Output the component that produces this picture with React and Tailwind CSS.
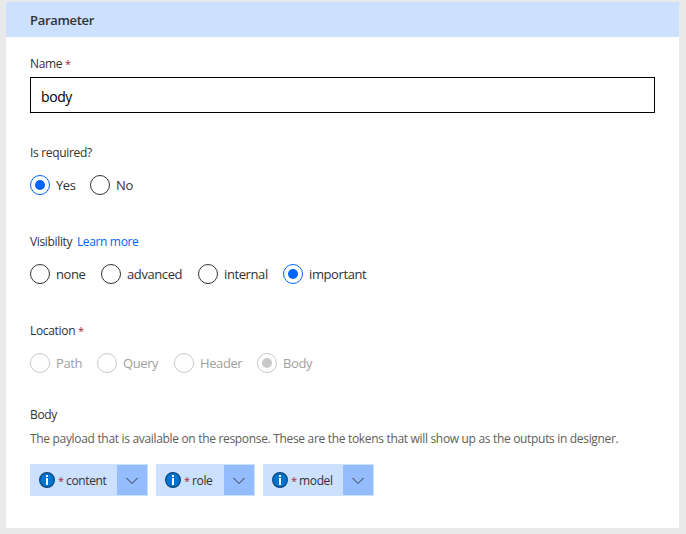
function Radio({ label, checked, disabled, width }) {
  const ring = disabled ? 'border-[#c8c8c8]' : checked ? 'border-[#0066ff]' : 'border-[#323130]';
  const dot = disabled ? 'bg-[#c8c8c8]' : 'bg-[#0066ff]';
  const text = disabled ? 'text-[#a19f9d]' : 'text-[#323130]';
  return (
    <label className={`flex items-center gap-1.5 ${width ?? ''}`}>
      <span className={`flex size-5 shrink-0 items-center justify-center rounded-full border ${ring}`}>
        {checked && <span className={`size-2.5 rounded-full ${dot}`} />}
      </span>
      <span className={`whitespace-nowrap text-[13px] leading-5 tracking-[-0.4px] ${text}`}>{label}</span>
    </label>
  );
}

function Star() {
  return <span className="text-[11px] leading-none text-[#a4262c]">*</span>;
}

function Token({ label, width }) {
  return (
    <div className={`flex h-8 border border-[#cce0ff] bg-[#cce0ff] ${width}`}>
      <div className="flex min-w-0 flex-1 items-center pl-2">
        <svg className="size-4 shrink-0" viewBox="0 0 16 16">
          <circle cx="8" cy="8" r="7.4" fill="#0072d0" stroke="#10477a" strokeWidth="1.2" />
          <path d="M7 3h2v2H7zM7 6h2v7H7z" fill="#fff" />
        </svg>
        <span className="ml-[3px] w-2 shrink-0 pt-px leading-4">
          <Star />
        </span>
        <span className="pt-0.5 whitespace-nowrap text-[12px] leading-4 tracking-[-0.35px]">{label}</span>
      </div>
      <button className="flex w-[30px] items-center justify-center bg-[#94bdff]">
        <svg className="mt-0.5" width="12" height="8" viewBox="0 0 12 8" fill="none" stroke="#323130">
          <path d="M.5 1 6 6.5 11.5 1" />
        </svg>
      </button>
    </div>
  );
}

export default function App() {
  return (
    <div className="h-[534px] w-[686px] overflow-hidden bg-[#e9e9e9] pt-0.5 pl-1.5 font-['Open_Sans','Noto_Sans',sans-serif] text-[12px] leading-4 tracking-[-0.32px] text-[#323130]">
      <section className="h-[526px] w-[673px] bg-white">
        <header className="flex h-[35px] items-center bg-[#cce0ff] pt-px pl-6 text-[13px] font-semibold tracking-[-0.3px]">
          Parameter
        </header>
        <div className="flex flex-col pt-[19px] pr-6 pl-6">
          <div className="h-4">
            Name <Star />
          </div>
          <input
            className="mt-[5px] h-9 w-full border border-black bg-white px-2.5 pt-0.5 text-[14px] tracking-[-0.4px] text-black"
            defaultValue="body"
          />
          <div className="mt-8 h-4">Is required?</div>
          <div className="mt-3.5 flex h-5">
            <Radio label="Yes" checked width="w-[60px]" />
            <Radio label="No" />
          </div>
          <div className="mt-[39px] h-4 tracking-[-0.35px]">
            Visibility <a className="ml-0.5 text-[#0066ff]">Learn more</a>
          </div>
          <div className="mt-3.5 flex h-5">
            <Radio label="none" width="w-[71px]" />
            <Radio label="advanced" width="w-[97px]" />
            <Radio label="internal" width="w-[85px]" />
            <Radio label="important" checked />
          </div>
          <div className="mt-[39px] h-4">
            Location <Star />
          </div>
          <div className="mt-3.5 flex h-5">
            <Radio label="Path" disabled width="w-[67px]" />
            <Radio label="Query" disabled width="w-[77px]" />
            <Radio label="Header" disabled width="w-[83px]" />
            <Radio label="Body" checked disabled />
          </div>
          <div className="mt-[34px] h-4">Body</div>
          <p className="mt-2 h-4 whitespace-nowrap text-[#605e5c]">
            The payload that is available on the response. These are the tokens that will show up as the outputs in designer.
          </p>
          <div className="mt-[17px] flex gap-2">
            <Token label="content" width="w-[118px]" />
            <Token label="role" width="w-[99px]" />
            <Token label="model" width="w-[111px]" />
          </div>
        </div>
      </section>
    </div>
  );
}
